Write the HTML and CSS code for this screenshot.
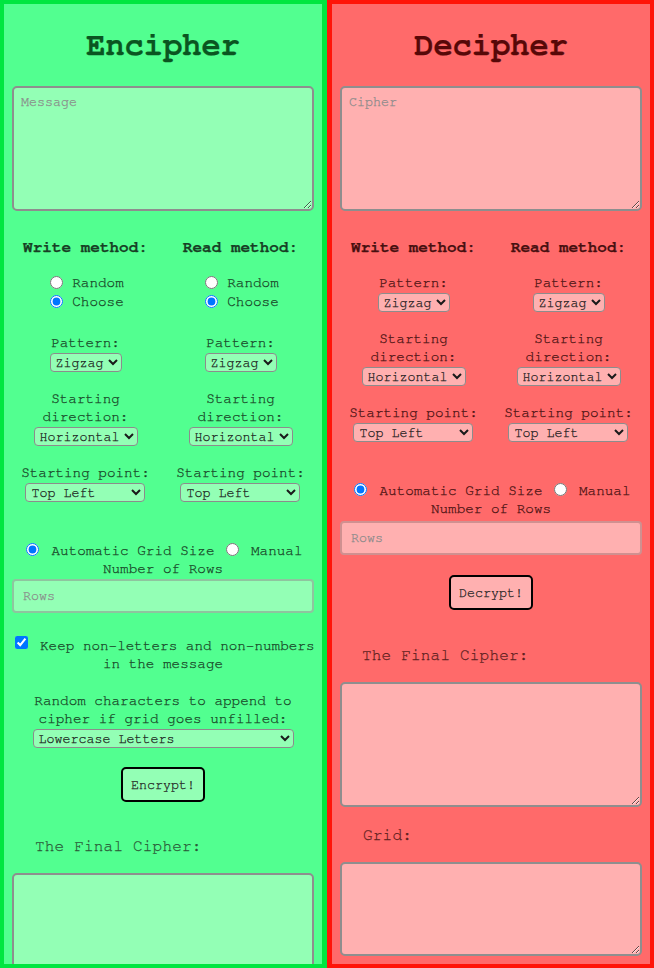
FILE: index.html
```html
<!DOCTYPE html>
<html lang="en">
<head>
<meta charset="utf-8">
<title>Cipher</title>
<link rel="stylesheet" href="styles.css">
</head>
<body>
<main class="page">
  <section class="panel panel-enc">
    <h1 class="title">Encipher</h1>
    <textarea class="box box-msg" placeholder="Message"></textarea>
    <div class="methods">
      <div class="col">
        <div class="col-title">Write method:</div>
        <div class="choice">
          <div class="choice-row"><input type="radio" name="wm"><label>Random</label></div>
          <div class="choice-row"><input type="radio" name="wm" checked><label>Choose</label></div>
        </div>
        <div class="field"><div class="field-label">Pattern:</div><select class="sel"><option>Zigzag</option><option>Spiral</option></select></div>
        <div class="field"><div class="field-label">Starting direction:</div><select class="sel"><option>Horizontal</option><option>Vertical</option></select></div>
        <div class="field"><div class="field-label">Starting point:</div><select class="sel"><option>Top Left</option><option>Top Right</option><option>Bottom Right</option></select></div>
      </div>
      <div class="col">
        <div class="col-title">Read method:</div>
        <div class="choice">
          <div class="choice-row"><input type="radio" name="rm"><label>Random</label></div>
          <div class="choice-row"><input type="radio" name="rm" checked><label>Choose</label></div>
        </div>
        <div class="field"><div class="field-label">Pattern:</div><select class="sel"><option>Zigzag</option><option>Spiral</option></select></div>
        <div class="field"><div class="field-label">Starting direction:</div><select class="sel"><option>Horizontal</option><option>Vertical</option></select></div>
        <div class="field"><div class="field-label">Starting point:</div><select class="sel"><option>Top Left</option><option>Top Right</option><option>Bottom Right</option></select></div>
      </div>
    </div>
    <div class="size-row"><input type="radio" name="es" checked><label>Automatic Grid Size</label> <input type="radio" name="es"><label>Manual</label> <span>Number of Rows</span></div>
    <input class="rows" type="text" placeholder="Rows">
    <div class="keep-row"><div class="keep-line"><input type="checkbox" checked><label>Keep non-letters and non-numbers</label></div><div class="keep-line">in the message</div></div>
    <div class="append"><div class="append-label">Random characters to append to cipher if grid goes unfilled:</div><select class="sel sel-wide"><option>Lowercase Letters</option><option>Uppercase Letters</option></select></div>
    <div class="action"><button class="btn" type="button">Encrypt!</button></div>
    <div class="out-label">The Final Cipher:</div>
    <textarea class="box box-out"></textarea>
  </section>

  <section class="panel panel-dec">
    <h1 class="title">Decipher</h1>
    <textarea class="box box-msg" placeholder="Cipher"></textarea>
    <div class="methods">
      <div class="col">
        <div class="col-title">Write method:</div>
        <div class="field"><div class="field-label">Pattern:</div><select class="sel"><option>Zigzag</option><option>Spiral</option></select></div>
        <div class="field"><div class="field-label">Starting direction:</div><select class="sel"><option>Horizontal</option><option>Vertical</option></select></div>
        <div class="field"><div class="field-label">Starting point:</div><select class="sel"><option>Top Left</option><option>Top Right</option><option>Bottom Right</option></select></div>
      </div>
      <div class="col">
        <div class="col-title">Read method:</div>
        <div class="field"><div class="field-label">Pattern:</div><select class="sel"><option>Zigzag</option><option>Spiral</option></select></div>
        <div class="field"><div class="field-label">Starting direction:</div><select class="sel"><option>Horizontal</option><option>Vertical</option></select></div>
        <div class="field"><div class="field-label">Starting point:</div><select class="sel"><option>Top Left</option><option>Top Right</option><option>Bottom Right</option></select></div>
      </div>
    </div>
    <div class="size-row"><input type="radio" name="ds" checked><label>Automatic Grid Size</label> <input type="radio" name="ds"><label>Manual</label> <span>Number of Rows</span></div>
    <input class="rows" type="text" placeholder="Rows">
    <div class="action action-dec"><button class="btn" type="button">Decrypt!</button></div>
    <div class="out-label out-label-dec">The Final Cipher:</div>
    <textarea class="box box-out"></textarea>
    <div class="out-label grid-label">Grid:</div>
    <textarea class="box box-grid"></textarea>
  </section>
</main>
</body>
</html>
```

FILE: styles.css
```css
html, body {
  margin: 0;
  padding: 0;
}

body {
  font-family: "Nimbus Mono PS", "Nimbus Mono L", "FreeMono", "Courier New", "Liberation Mono", monospace;
  font-size: 14.3px;
  line-height: 18px;
}

.page {
  display: flex;
  width: 100%;
  height: 100vh;
}

.panel {
  flex: 1 1 0;
  min-width: 0;
  box-sizing: border-box;
  height: 100vh;
  overflow: hidden;
  border: 4px solid;
  padding: 0 8px;
  text-align: center;
  -webkit-text-stroke: 0.25px currentColor;
}

.panel-enc {
  border-color: #00e640;
  border-right-width: 5px;
  background: #52ff90;
  color: #173f25;
}

.panel-dec {
  border-color: #ff1408;
  border-left-width: 5px;
  background: #ff6a6a;
  color: #471010;
}

.title {
  margin: 23px 0 23px;
  font-size: 32px;
  line-height: 36px;
  font-weight: bold;
}

.panel-enc .title { color: #0a5521; }
.panel-dec .title { color: #570808; }

.box,
.sel,
.rows,
.btn {
  font-family: "Nimbus Mono PS", "Nimbus Mono L", "FreeMono", "Courier New", "Liberation Mono", monospace;
}

.box {
  display: block;
  width: 100%;
  box-sizing: border-box;
  margin: 0;
  padding: 7px;
  border: 2px solid #8e8e8e;
  border-radius: 5px;
  font-size: 13.33px;
  line-height: 15px;
  color: #222;
}

.box::placeholder,
.rows::placeholder {
  color: #8a8a8a;
}

.panel-enc .box,
.panel-enc .rows,
.panel-enc .sel,
.panel-enc .btn {
  background: #93ffb5;
}

.panel-dec .box,
.panel-dec .rows,
.panel-dec .sel,
.panel-dec .btn {
  background: #ffb0b0;
}

.box-msg { height: 125px; }
.box-out { height: 125px; margin-top: 18px; }
.box-grid { height: 94px; margin-top: 18px; }

.methods {
  display: grid;
  grid-template-columns: 1fr 1fr;
  margin: 27px -4px 0;
}

.col {
  display: flex;
  flex-direction: column;
  align-items: center;
}

.col-title {
  font-size: 16px;
  font-weight: bold;
  line-height: 18px;
}

.choice {
  margin: 18px 0 4px;
  text-align: left;
}

.choice-row {
  height: 19px;
  line-height: 19px;
}

.choice-row input {
  margin: 0 9px 0 3px;
  vertical-align: -2px;
}

.field {
  margin-top: 18px;
  display: flex;
  flex-direction: column;
  align-items: center;
}

.field-label {
  line-height: 18px;
}

.sel {
  height: 19px;
  margin: 1px 0 0;
  padding: 0 1px;
  border: 1.5px solid #8c8c8c;
  border-radius: 4px;
  font-size: 13.33px;
  color: #1a1a1a;
}

.size-row {
  margin-top: 40px;
  line-height: 18px;
}

.size-row input {
  margin: 0 3px 0 3px;
  vertical-align: -1px;
}

.size-row label {
  margin-left: 9px;
}

.rows {
  display: block;
  width: 100%;
  height: 34px;
  box-sizing: border-box;
  margin: 1px 0 0;
  padding: 0 9px;
  border: 2px solid #8fc49f;
  border-radius: 4px;
  font-size: 13.33px;
}

.panel-dec .rows {
  border-color: #d09090;
  margin-top: 3px;
}

.keep-row {
  margin-top: 23px;
  line-height: 18px;
}

.keep-line {
  white-space: nowrap;
}

.keep-line input {
  margin: 0 3px 0 3px;
  vertical-align: 1px;
}

.keep-line label {
  margin-left: 9px;
}

.keep-row .keep-line:first-child {
  text-align: left;
}

.append {
  margin-top: 19px;
}

.append-label {
  line-height: 18px;
}

.sel-wide {
  width: 261px;
}

.action {
  margin-top: 19px;
}

.action-dec {
  margin-top: 20px;
}

.btn {
  height: 35px;
  padding: 0 8.5px;
  border: 2px solid #000;
  border-radius: 5px;
  font-size: 13.33px;
  color: #222;
}

.out-label {
  margin-top: 35px;
  padding-left: 23px;
  text-align: left;
  font-size: 16px;
  line-height: 18px;
  letter-spacing: 0.2px;
}

.panel-enc .out-label { color: #2a5a38; }
.panel-dec .out-label { color: #5e2020; }

.out-label-dec {
  margin-top: 36px;
  padding-left: 22px;
}

.grid-label {
  margin-top: 19px;
}
```
